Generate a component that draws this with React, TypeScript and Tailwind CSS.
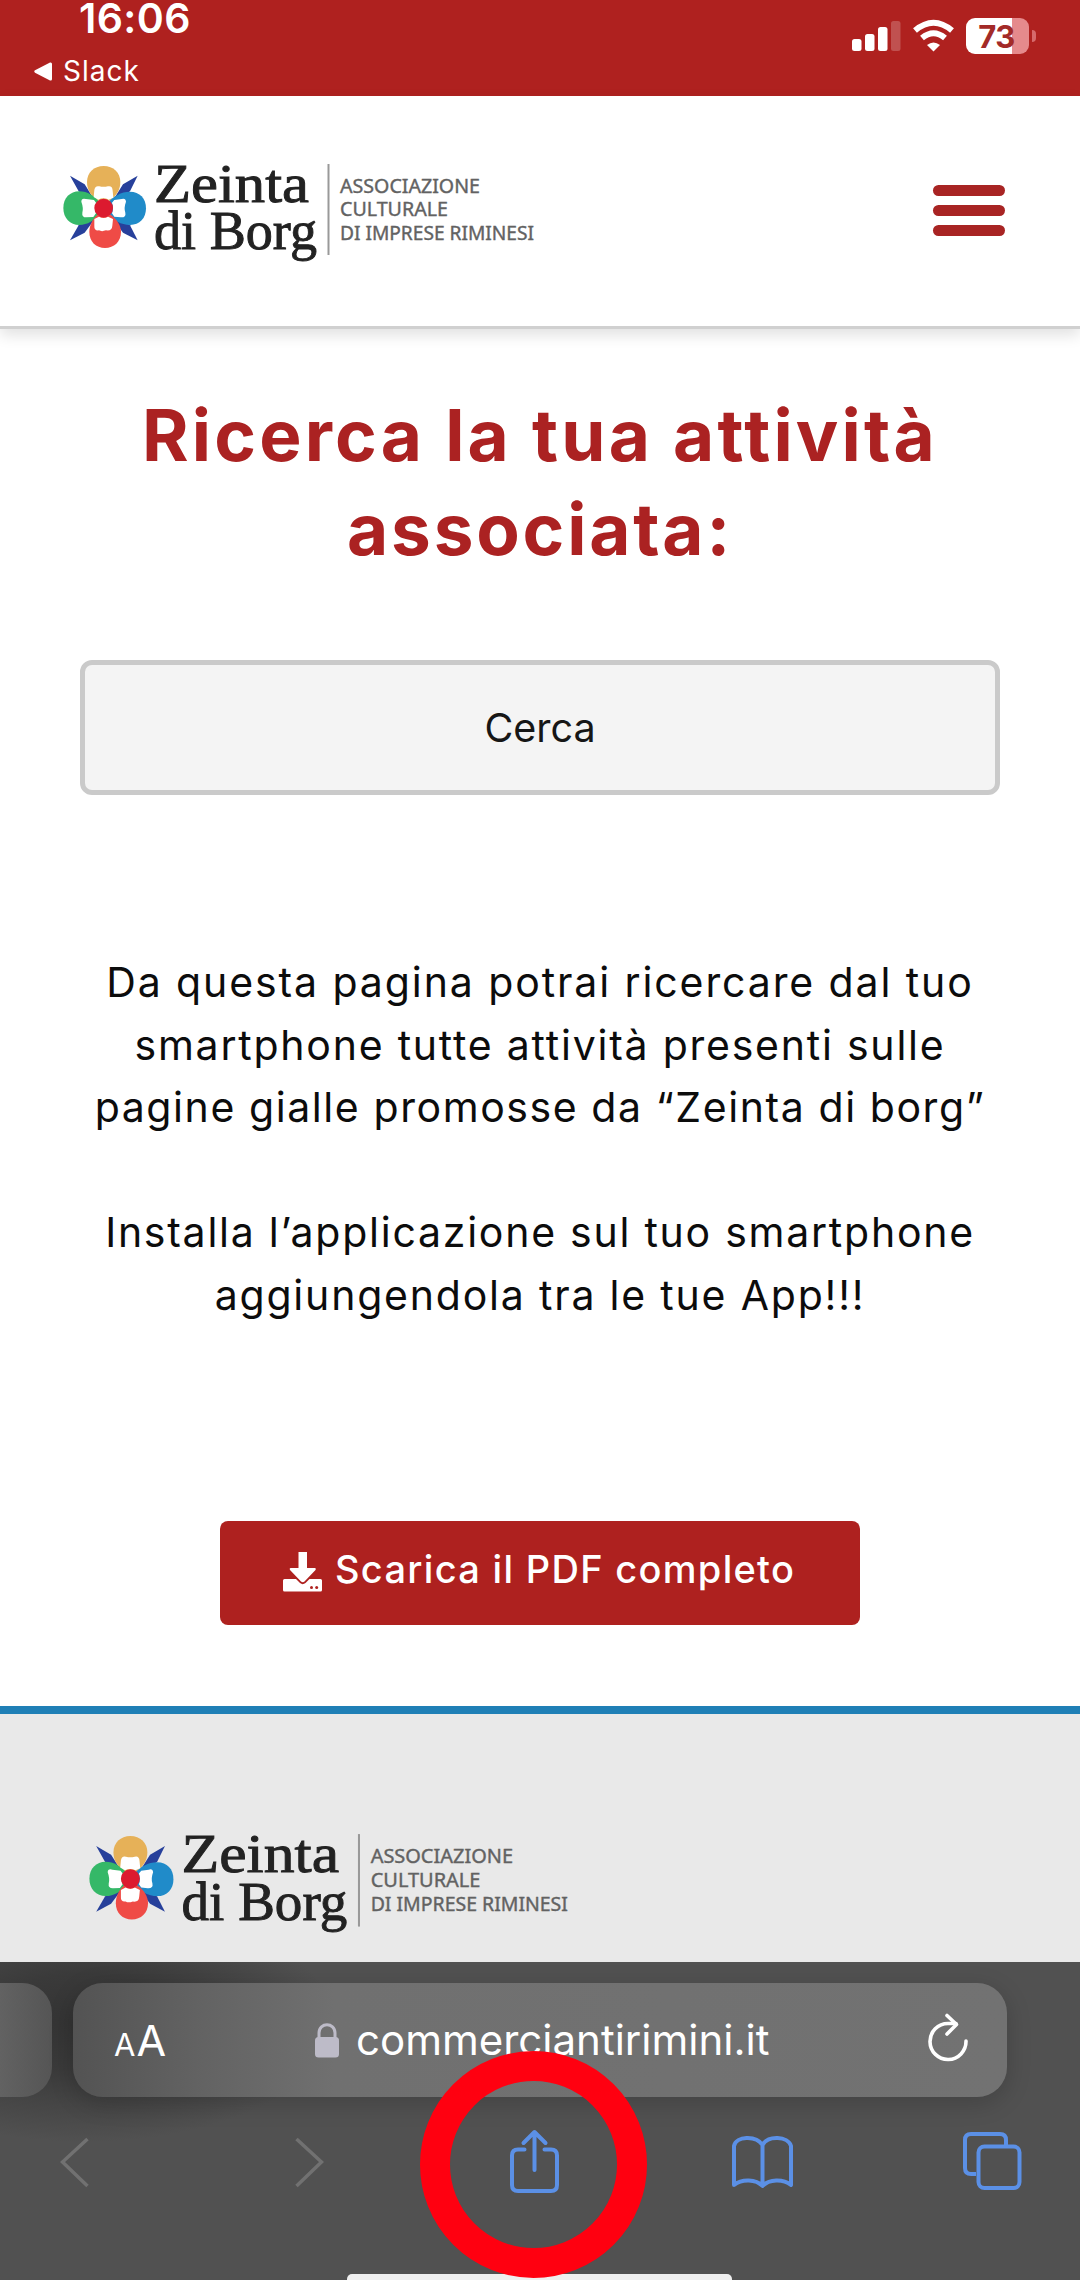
import React from 'react';

interface LogoProps {
  width: number;
}

const Logo: React.FC<LogoProps> = ({ width }) => (
  <svg width={width} viewBox="0 0 480 110" className="overflow-visible" role="img" aria-label="Zeinta di Borg">
    {/* flower */}
    <g transform="translate(-10 -10) scale(0.33333)">
      <g fill="#27409b">
        <path d="M60 77 L104 103 L126 138 L146 160 L118 148 L86 124 Z" />
        <path d="M263 77 L219 103 L197 138 L177 160 L205 148 L240 124 Z" />
        <path d="M60 271 L104 248 L126 218 L146 188 L112 206 L86 226 Z" />
        <path d="M263 271 L219 248 L197 218 L177 188 L212 206 L240 226 Z" />
      </g>
      <path d="M161 48 C190 48 211 68 211 96 C211 119 201 135 180 152 H142 C121 135 111 119 111 96 C111 68 132 48 161 48 Z" fill="#e6b158" />
      <path d="M40 174 C40 144 60 124 88 124 C112 124 134 138 150 158 V190 C134 212 112 225 88 225 C60 225 40 204 40 174 Z" fill="#35b868" />
      <path d="M288 175 C288 145 269 125 240 125 C213 125 190 139 173 158 V190 C190 212 213 225 240 225 C269 225 288 205 288 175 Z" fill="#208bc9" />
      <path d="M165 294 C192 294 213 275 213 246 C213 226 201 208 182 194 H142 C127 208 118 226 118 246 C118 275 138 294 165 294 Z" fill="#ef4b46" />
      <g fill="#fff">
        <path d="M133 120 Q135 106 148 109 Q160 112 174 109 Q187 106 188 122 L190 143 L176 149 Q160 141 145 149 L131 141 Z" />
        <path d="M133 228 Q132 243 147 241 Q155 246 168 241 Q186 244 187 227 L189 207 L174 200 Q161 208 147 200 L133 207 Z" />
        <path d="M94 155 Q94 143 108 147 L132 150 L138 158 Q132 175 138 190 L130 201 L109 202 Q95 202 97 188 Q101 174 94 155 Z" />
        <path d="M228 155 Q227 143 215 147 L193 150 L186 158 Q192 175 186 190 L193 200 L212 202 Q229 203 226 188 Q221 174 228 155 Z" />
      </g>
      <circle cx="161" cy="174" r="28" fill="#dc1a2f" />
    </g>
    <g fill="#222" stroke="#222" strokeWidth="0.9" fontFamily="Liberation Serif, serif" fontSize="54">
      <text x="94" y="41.500" textLength="155" lengthAdjust="spacingAndGlyphs">Zeinta</text>
      <text x="94" y="88.500" textLength="163" lengthAdjust="spacingAndGlyphs">di Borg</text>
    </g>
    <path d="M268.500 4V95" stroke="#999" strokeWidth="2" />
    <g fill="#626262" stroke="#626262" strokeWidth="0.4" fontFamily="Noto Sans, sans-serif" fontSize="19.800">
      <text x="280" y="32.500" textLength="140" lengthAdjust="spacingAndGlyphs">ASSOCIAZIONE</text>
      <text x="280" y="56" textLength="108" lengthAdjust="spacingAndGlyphs">CULTURALE</text>
      <text x="280" y="79.500" textLength="194" lengthAdjust="spacingAndGlyphs">DI IMPRESE RIMINESI</text>
    </g>
  </svg>
);

const StatusBar = () => (
  <div className="flex h-[96px] shrink-0 justify-between bg-[#af211f] text-white">
    <div className="pl-[34px]">
      <div className="h-[54px] pl-[45px] text-[41px] leading-[37px] font-semibold tracking-[0.4px]">16:06</div>
      <div className="flex h-[34px] items-center gap-[11px]">
        <svg width="18" height="19" viewBox="0 0 18 19" fill="currentColor">
          <path d="M1 8.3 16 .5Q18 0 18 2V17Q18 19 16 18.5L1 10.7Q-.5 9.5 1 8.3Z" />
        </svg>
        <span className="text-[28px] leading-[34px] tracking-[1px]">Slack</span>
      </div>
    </div>
    <div className="mt-[18px] mr-[44px] flex h-[36px]">
      <svg width="50" height="36" viewBox="0 0 50 36" fill="currentColor">
        <rect x="0" y="21" width="9.500" height="12" rx="2.500" />
        <rect x="13" y="16" width="9.500" height="17" rx="2.500" />
        <rect x="26" y="9" width="9.500" height="24" rx="2.500" />
        <rect x="39" y="3" width="9.500" height="30" rx="2.500" opacity="0.22" />
      </svg>
      <svg width="41" height="36" viewBox="0 0 41 36" className="ml-[11px]" fill="none" stroke="currentColor" strokeWidth="6">
        <path d="M2 12.500Q20.500-3 39 12.500" />
        <path d="M9 20Q20.500 10.500 32 20" />
        <path d="M20.500 33.500L14 27Q20.500 22 27 27Z" fill="currentColor" stroke="none" />
      </svg>
      <div className="ml-[12px] flex h-[36px] w-[63px] items-center justify-center rounded-[9px] bg-[linear-gradient(90deg,#fff_73%,#e58a8c_73%)] pr-[2px] text-[31px] leading-none font-bold tracking-[-0.5px] text-[#a32a28]">
        73
      </div>
      <div className="mt-[12px] ml-[3px] h-[12px] w-[4px] rounded-r-full bg-[#d66a6c]" />
    </div>
  </div>
);

const Header = () => (
  <header className="flex h-[233px] shrink-0 items-start justify-between border-b-[3px] border-[#d0d0d0] bg-white pr-[75px] pl-[60px] shadow-[0_6px_14px_rgba(0,0,0,0.12)]">
    <div className="mt-[64px]">
      <Logo width={480} />
    </div>
    <button className="mt-[89px] flex w-[72px] flex-col gap-[9.500px]" aria-label="Menu">
      <span className="h-[10.500px] w-full rounded-full bg-[#a82423]" />
      <span className="h-[10.500px] w-full rounded-full bg-[#a82423]" />
      <span className="h-[10.500px] w-full rounded-full bg-[#a82423]" />
    </button>
  </header>
);

const Content = () => (
  <main className="flex h-[1377px] shrink-0 flex-col items-center bg-white">
    <h1 className="mt-[59px] text-center text-[71px] leading-[94px] font-bold whitespace-nowrap text-[#ab2222]">
      <span className="block tracking-[3.200px]">Ricerca la tua attività</span>
      <span className="block tracking-[2.800px]">associata:</span>
    </h1>
    <button className="mt-[84px] h-[135px] w-[920px] rounded-[12px] border-[5px] border-[#cacaca] bg-[#f4f4f4] pt-[3px] text-[39.500px] text-[#161616]">
      Cerca
    </button>
    <div className="mt-[156px] text-center text-[41px] leading-[62.600px] whitespace-nowrap text-[#0c0c0c]">
      <p className="tracking-[1.900px]">Da questa pagina potrai ricercare dal tuo</p>
      <p className="tracking-[1.770px]">smartphone tutte attività presenti sulle</p>
      <p className="tracking-[1.580px]">pagine gialle promosse da “Zeinta di borg”</p>
      <p className="mt-[62.600px] tracking-[1.750px]">Installa l’applicazione sul tuo smartphone</p>
      <p className="tracking-[1.800px]">aggiungendola tra le tue App!!!</p>
    </div>
    <button className="mt-[194.400px] flex h-[104px] w-[640px] rounded-[8px] bg-[#ae211f] pt-[25px] pl-[63px] text-white">
      <svg width="39" height="40" viewBox="0 0 39 40" className="mt-[6px]" fill="currentColor">
        <path d="M15.500 0H24V16H32Q33.500 16.500 32.500 18L21.500 29.500Q19.800 31 18 29.500L7 18Q6 16.500 7.500 16H15.500Z" />
        <path d="M0 28.500Q0 27 1.500 27H13L17 31Q19.700 33.300 22.500 31L26.500 27H37.500Q39 27 39 28.500V38Q39 39.500 37.500 39.500H1.500Q0 39.500 0 38Z" />
        <circle cx="28.500" cy="35.500" r="1.500" fill="#ae211f" />
        <circle cx="33.700" cy="35.500" r="1.500" fill="#ae211f" />
      </svg>
      <span className="ml-[13px] pt-[1px] text-[38px] leading-[44px] font-medium tracking-[1.300px] whitespace-nowrap">
        Scarica il PDF completo
      </span>
    </button>
  </main>
);

const Footer = () => (
  <footer className="h-[256px] shrink-0 border-t-[8px] border-[#1f7fb6] bg-[#e9e9e9] pt-[116px] pl-[86px]">
    <Logo width={488} />
  </footer>
);

const SafariBar = () => (
  <div className="flex h-[318px] shrink-0 flex-col bg-[#515151] bg-[radial-gradient(ellipse_250px_120px_at_85px_60px,#333,#3a3a3a_40%,transparent)]">
    <div className="flex shrink-0 gap-[21px] pt-[21px]">
      <div className="h-[114px] w-[52px] rounded-r-[30px] bg-gradient-to-r from-[#626262] to-[#555]" />
      <div className="flex h-[114px] w-[934px] items-center rounded-[30px] bg-[linear-gradient(90deg,#535353,#636363_14%,#707070_28%,#727272)] pl-[41px] text-white shadow-[0_6px_24px_rgba(0,0,0,0.18)]">
        <div className="flex w-[51px] items-baseline gap-px leading-none">
          <span className="text-[31px]">A</span>
          <span className="text-[43px] tracking-[-1px]">A</span>
        </div>
        <svg width="24" height="35" viewBox="0 0 24 35" className="ml-[150px]" fill="#bdbbc8">
          <path d="M4 16V10C4 -1 20 -1 20 10V16" fill="none" stroke="#bdbbc8" strokeWidth="3" />
          <rect x="0" y="14" width="24" height="20.500" rx="3.500" />
        </svg>
        <span className="ml-[17px] w-[412px] text-[42px] leading-none whitespace-nowrap">commerciantirimini.it</span>
        <svg width="42" height="50" viewBox="0 0 42 50" className="mb-[4px] ml-[160px]" fill="none" stroke="currentColor" strokeWidth="3.600" strokeLinecap="round">
          <path d="M38 28A18 18 0 1 1 20 10.500H28" />
          <path d="M19 2.500L28.500 11.500L19 21" strokeLinejoin="round" />
        </svg>
      </div>
    </div>
    <div className="flex pt-[29px]">
      <svg width="30" height="64" viewBox="0 0 30 64" className="ml-[60px]" fill="none" stroke="#717171" strokeWidth="3.500">
        <path d="M27.500 13L2.500 36L27.500 60" />
      </svg>
      <svg width="30" height="64" viewBox="0 0 30 64" className="ml-[204px]" fill="none" stroke="#717171" strokeWidth="3.500">
        <path d="M2.500 13L27.500 36L2.500 60" />
      </svg>
      <svg width="52" height="68" viewBox="0 0 52 68" className="ml-[184px]" fill="none" stroke="#5b90e6" strokeWidth="4" strokeLinecap="round" strokeLinejoin="round">
        <path d="M16.500 23.500H10Q4 23.500 4 29.500V59Q4 65 10 65H43Q49 65 49 59V29.500Q49 23.500 43 23.500H36.500" />
        <path d="M26.500 44V6M15.500 17L26.500 6L37.500 17" />
      </svg>
      <svg width="64" height="64" viewBox="0 0 64 64" className="ml-[170px]" fill="none" stroke="#5b90e6" strokeWidth="4" strokeLinejoin="round">
        <path d="M32.500 19C26 9 6 10 4 20V59C12 52.500 26 53 32.500 60C39 53 53 52.500 61 59V20C58 10 38 9 32.500 19V60" />
      </svg>
      <svg width="62" height="68" viewBox="0 0 62 68" className="ml-[167px]" fill="none" stroke="#5b90e6" strokeWidth="4">
        <path d="M15 48H10Q4 48 4 42V14Q4 8 10 8H39Q45 8 45 14V20" />
        <rect x="17.500" y="20.500" width="41" height="41.500" rx="6" />
      </svg>
    </div>
    <div className="mt-auto ml-[347px] h-[6px] w-[385px] rounded-t-[5px] bg-[#efefef]" />
  </div>
);

export default function App() {
  return (
    <div className="relative flex h-[2280px] w-[1080px] flex-col overflow-hidden bg-white font-['Inter',sans-serif]">
      <StatusBar />
      <div className="z-10 flex flex-col">
        <Header />
      </div>
      <Content />
      <Footer />
      <SafariBar />
      {/* highlight around the share button */}
      <div className="absolute top-[2051px] left-[420px] h-[227px] w-[227px] rounded-full border-[30px] border-[#ff0010]" />
    </div>
  );
}
